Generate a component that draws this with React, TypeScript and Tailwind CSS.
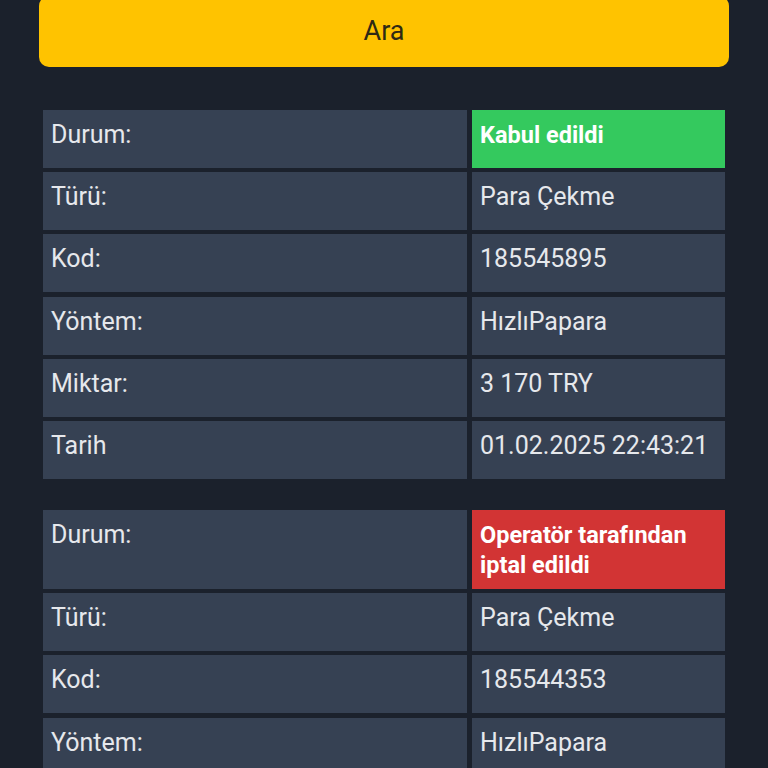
const TRANSACTIONS = [
  {
    status: 'Kabul edildi',
    statusClass: 'bg-[#34c95e]',
    rows: [
      ['Türü:', 'Para Çekme'],
      ['Kod:', '185545895'],
      ['Yöntem:', 'HızlıPapara'],
      ['Miktar:', '3 170 TRY'],
      ['Tarih', '01.02.2025 22:43:21'],
    ],
  },
  {
    status: 'Operatör tarafından iptal edildi',
    statusClass: 'bg-[#d23434]',
    rows: [
      ['Türü:', 'Para Çekme'],
      ['Kod:', '185544353'],
      ['Yöntem:', 'HızlıPapara'],
      ['Miktar:', '3 170 TRY'],
      ['Tarih', '01.02.2025 22:40:02'],
    ],
  },
]

function Cell({ children }: { children: React.ReactNode }) {
  return (
    <div className="min-h-[58px] bg-[#364153] px-2 pt-[10px] text-[25px] leading-[30px] text-[#e6e8ec]">
      {children}
    </div>
  )
}

export default function App() {
  return (
    <div
      className="min-h-screen bg-[#1b212c] px-[39px] pb-10"
      style={{ fontFamily: 'Roboto, "Liberation Sans", sans-serif' }}
    >
      <button className="-mt-[4px] flex h-[71px] w-full items-center justify-center rounded-[10px] bg-[#ffc300] text-[27px] text-[#2f2a14]">
        Ara
      </button>

      <div className="mt-[43px] flex flex-col gap-[31px] px-[4px]">
        {TRANSACTIONS.map((t, i) => (
          <div key={i} className="grid grid-cols-[424px_253px] gap-x-[5px] gap-y-[4.2px]">
            <Cell>Durum:</Cell>
            <div
              className={`${t.statusClass} min-h-[58px] px-2 pt-[10px] pb-[9px] text-[23.5px] font-bold leading-[30px] text-white`}
            >
              {t.status}
            </div>
            {t.rows.map(([label, value]) => (
              <>
                <Cell key={label}>{label}</Cell>
                <Cell key={label + 'v'}>{value}</Cell>
              </>
            ))}
          </div>
        ))}
      </div>
    </div>
  )
}
